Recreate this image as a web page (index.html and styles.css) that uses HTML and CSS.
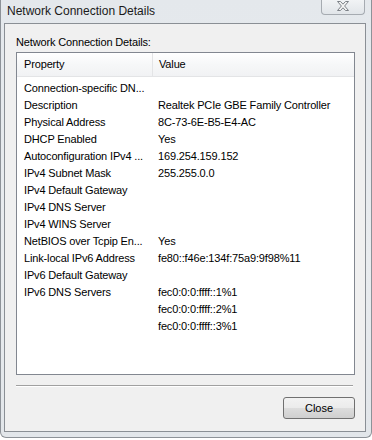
FILE: index.html
```html
<!DOCTYPE html>
<html lang="en">
<head>
  <meta charset="UTF-8" />
  <title>Network Connection Details</title>
  <link rel="stylesheet" href="styles.css">
</head>
<body>
  <div class="window">
    <div class="titlebar">
      <div class="caption">Network Connection Details</div>
      <div class="close-x">
        <svg width="14" height="11" viewBox="0 0 14 11">
          <path d="M1.5 0.5 L4.5 0.5 L7 3.2 L9.5 0.5 L12.5 0.5 L8.6 5 L12.5 9.5 L9.5 9.5 L7 6.8 L4.5 9.5 L1.5 9.5 L5.4 5 Z" fill="#f4f4f4" stroke="#7d8288" stroke-width="1" stroke-linejoin="round" />
        </svg>
      </div>
    </div>

    <div class="client">
      <div class="label">Network Connection Details:</div>

      <div class="listview">
        <div class="list-header">
          <div class="col-prop">Property</div>
          <div class="col-val">Value</div>
        </div>
        <div class="rows">
          <div class="row"><div class="col-prop">Connection-specific DN...</div><div class="col-val"></div></div>
          <div class="row"><div class="col-prop">Description</div><div class="col-val">Realtek PCIe GBE Family Controller</div></div>
          <div class="row"><div class="col-prop">Physical Address</div><div class="col-val">8C-73-6E-B5-E4-AC</div></div>
          <div class="row"><div class="col-prop">DHCP Enabled</div><div class="col-val">Yes</div></div>
          <div class="row"><div class="col-prop">Autoconfiguration IPv4 ...</div><div class="col-val">169.254.159.152</div></div>
          <div class="row"><div class="col-prop">IPv4 Subnet Mask</div><div class="col-val">255.255.0.0</div></div>
          <div class="row"><div class="col-prop">IPv4 Default Gateway</div><div class="col-val"></div></div>
          <div class="row"><div class="col-prop">IPv4 DNS Server</div><div class="col-val"></div></div>
          <div class="row"><div class="col-prop">IPv4 WINS Server</div><div class="col-val"></div></div>
          <div class="row"><div class="col-prop">NetBIOS over Tcpip En...</div><div class="col-val">Yes</div></div>
          <div class="row"><div class="col-prop">Link-local IPv6 Address</div><div class="col-val">fe80::f46e:134f:75a9:9f98%11</div></div>
          <div class="row"><div class="col-prop">IPv6 Default Gateway</div><div class="col-val"></div></div>
          <div class="row"><div class="col-prop">IPv6 DNS Servers</div><div class="col-val">fec0:0:0:ffff::1%1</div></div>
          <div class="row"><div class="col-prop"></div><div class="col-val">fec0:0:0:ffff::2%1</div></div>
          <div class="row"><div class="col-prop"></div><div class="col-val">fec0:0:0:ffff::3%1</div></div>
        </div>
      </div>

      <div class="separator"></div>

      <div class="buttons">
        <button class="btn">Close</button>
      </div>
    </div>
  </div>
</body>
</html>
```

FILE: styles.css
```css
body {
  margin: 0;
  background-color: #fff;
  font-family: "Liberation Sans", Arial, sans-serif;
  font-size: 11px;
  letter-spacing: -0.15px;
  color: #000;
}

.window {
  width: 370px;
  height: 437px;
  background: linear-gradient(to bottom, #e4e8ec, #e9ecef 60%, #e2e6ea);
  border: 1px solid #8d9298;
  border-top: none;
  border-radius: 0 0 6px 6px;
  display: flex;
  flex-direction: column;
}

.titlebar {
  height: 23px;
  display: flex;
  justify-content: space-between;
  align-items: flex-start;
  padding-left: 6px;
  padding-right: 6px;
}

.caption {
  font-size: 12px;
  letter-spacing: 0;
  line-height: 16px;
  margin-top: 3px;
  color: #1a1a1a;
}

.close-x {
  width: 44px;
  height: 15px;
  box-sizing: border-box;
  border: 1px solid #a6abb1;
  border-top: none;
  border-radius: 0 0 4px 4px;
  background: linear-gradient(to bottom, #f1f3f5, #e1e5e9);
  display: flex;
  justify-content: center;
  align-items: flex-start;
  padding-top: 1px;
}

.client {
  margin: 0 5px 5px 3px;
  flex: 1;
  background-color: #f0f0f0;
  border: 1px solid #8a8f95;
  padding: 10px 10px 0 11px;
  display: flex;
  flex-direction: column;
}

.label {
  line-height: 16px;
  height: 16px;
  margin-bottom: 2px;
}

.listview {
  height: 321px;
  background-color: #fff;
  border: 1px solid #828790;
}

.list-header {
  display: flex;
  height: 23px;
  background: linear-gradient(to bottom, #ffffff, #f6f7f8 50%, #f1f2f4);
  border-bottom: 1px solid #e3e4e6;
  line-height: 23px;
}

.list-header .col-prop {
  border-right: 1px solid #e3e4e6;
}

.rows {
  padding-top: 3px;
}

.row {
  display: flex;
  height: 17px;
  line-height: 17px;
}

.col-prop {
  width: 128px;
  padding-left: 7px;
  white-space: nowrap;
  overflow: hidden;
}

.col-val {
  padding-left: 6px;
  white-space: nowrap;
}

.separator {
  margin-top: 10px;
  height: 1px;
  margin-right: 2px;
  background-color: #a0a0a0;
  border-bottom: 1px solid #fff;
}

.buttons {
  display: flex;
  justify-content: flex-end;
  margin-top: 10px;
}

.btn {
  width: 72px;
  height: 22px;
  font-family: "Liberation Sans", Arial, sans-serif;
  font-size: 11px;
  color: #000;
  border: 1px solid #707070;
  border-radius: 3px;
  background: linear-gradient(to bottom, #f2f2f2, #ebebeb 50%, #dddddd 51%, #cfcfcf);
  padding: 0;
}
```
